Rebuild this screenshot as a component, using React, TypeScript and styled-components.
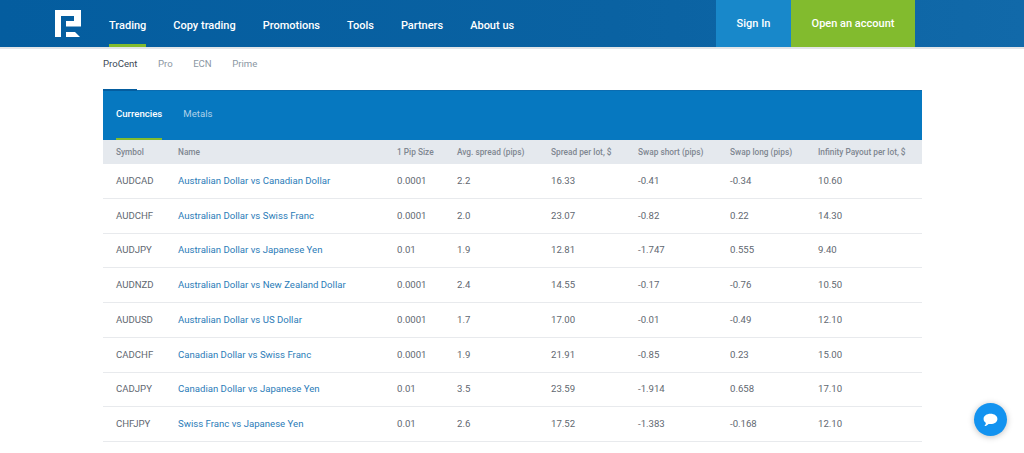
import React from 'react';
import styled, { createGlobalStyle } from 'styled-components';

const GlobalStyle = createGlobalStyle`
  html, body {
    margin: 0;
    padding: 0;
    background: #fff;
    font-family: Roboto, "Liberation Sans", sans-serif;
    overflow: hidden;
  }
`;

const Page = styled.div`
  position: relative;
  width: 1024px;
  height: 453px;
  overflow: hidden;
  background: #fff;
`;

const Header = styled.header`
  display: flex;
  height: 47px;
  padding-left: 55px;
  background: linear-gradient(90deg, #045d9f 0%, #0a62a2 60%, #1169a9 100%);
  border-bottom: 2px solid #e2e5e8;
`;

const Logo = styled.svg`
  width: 26px;
  height: 27px;
  margin-top: 10px;
  margin-right: 28px;
  flex-shrink: 0;
`;

const Nav = styled.nav`
  display: flex;
  gap: 27px;
  flex: 1;
`;

const NavItem = styled.a<{ $active?: boolean }>`
  display: flex;
  align-items: center;
  height: 47px;
  box-sizing: border-box;
  padding-top: 6px;
  font-size: 11px;
  font-weight: 500;
  color: #fff;
  border-bottom: 3px solid ${(props) => (props.$active ? '#82bb2e' : 'transparent')};
`;

const SignIn = styled.a`
  display: flex;
  align-items: center;
  justify-content: center;
  width: 75px;
  height: 47px;
  font-size: 11px;
  font-weight: 500;
  color: #fff;
  background: #1888ca;
`;

const OpenAccount = styled(SignIn)`
  width: 124px;
  margin-right: 109px;
  background: #82bb2e;
`;

const Main = styled.main`
  margin: 0 102px 0 103px;
`;

const AccountTabs = styled.div`
  display: flex;
  gap: 20.5px;
  height: 41px;
`;

const AccountTab = styled.a<{ $active?: boolean }>`
  padding-top: 8px;
  font-size: 9.6px;
  line-height: 14px;
  white-space: nowrap;
  color: ${(props) => (props.$active ? '#3d4a57' : '#8b97a3')};
`;

const Panel = styled.section`
  position: relative;
  border-top: 1px solid #0a6cb0;
`;

const ActiveMark = styled.span`
  position: absolute;
  left: 0;
  top: -2px;
  width: 34px;
  height: 2px;
  background: #045d9f;
`;

const InstrumentTabs = styled.div`
  display: flex;
  gap: 21px;
  height: 49px;
  padding-left: 13px;
  background: #0678c0;
`;

const InstrumentTab = styled.a<{ $active?: boolean }>`
  height: 49px;
  box-sizing: border-box;
  padding-top: 16px;
  font-size: 9.6px;
  line-height: 14px;
  font-weight: ${(props) => (props.$active ? 500 : 400)};
  color: ${(props) => (props.$active ? '#fff' : '#b0d2e9')};
  border-bottom: 2px solid ${(props) => (props.$active ? '#82bb2e' : 'transparent')};
`;

const Row = styled.div`
  display: grid;
  grid-template-columns: 62px 219px 60px 94px 87px 92px 88px 1fr;
  padding-left: 13px;
  align-items: center;
`;

const HeadRow = styled(Row)`
  height: 24px;
  background: #e5e9ee;
  font-size: 8.3px;
  font-weight: 500;
  color: #7f8791;
  white-space: nowrap;
`;

const BodyRow = styled(Row)`
  height: 34.75px;
  box-sizing: border-box;
  padding-bottom: 1px;
  border-bottom: 1px solid #e8eaed;
  font-size: 9.6px;
  color: #5f6871;
`;

const PairLink = styled.a`
  color: #2b7cb8;
  white-space: nowrap;
`;

const ChatButton = styled.button`
  position: absolute;
  left: 974px;
  top: 403px;
  display: flex;
  align-items: center;
  justify-content: center;
  width: 33px;
  height: 33px;
  padding: 0;
  border: 0;
  border-radius: 50%;
  background: #1393f0;
  box-shadow: 0 1px 6px rgba(0, 0, 0, 0.25);
`;

const navItems = ['Trading', 'Copy trading', 'Promotions', 'Tools', 'Partners', 'About us'];
const accountTypes = ['ProCent', 'Pro', 'ECN', 'Prime'];
const columns = ['Symbol', 'Name', '1 Pip Size', 'Avg. spread (pips)', 'Spread per lot, $', 'Swap short (pips)', 'Swap long (pips)', 'Infinity Payout per lot, $'];

const rows = [
  ['AUDCAD', 'Australian Dollar vs Canadian Dollar', '0.0001', '2.2', '16.33', '-0.41', '-0.34', '10.60'],
  ['AUDCHF', 'Australian Dollar vs Swiss Franc', '0.0001', '2.0', '23.07', '-0.82', '0.22', '14.30'],
  ['AUDJPY', 'Australian Dollar vs Japanese Yen', '0.01', '1.9', '12.81', '-1.747', '0.555', '9.40'],
  ['AUDNZD', 'Australian Dollar vs New Zealand Dollar', '0.0001', '2.4', '14.55', '-0.17', '-0.76', '10.50'],
  ['AUDUSD', 'Australian Dollar vs US Dollar', '0.0001', '1.7', '17.00', '-0.01', '-0.49', '12.10'],
  ['CADCHF', 'Canadian Dollar vs Swiss Franc', '0.0001', '1.9', '21.91', '-0.85', '0.23', '15.00'],
  ['CADJPY', 'Canadian Dollar vs Japanese Yen', '0.01', '3.5', '23.59', '-1.914', '0.658', '17.10'],
  ['CHFJPY', 'Swiss Franc vs Japanese Yen', '0.01', '2.6', '17.52', '-1.383', '-0.168', '12.10'],
];

const App = () => (
  <Page>
    <GlobalStyle />
    <Header>
      <Logo viewBox="0 0 26 27">
        <path fill="#fff" d="M0 0H26V16.5H11V11H19V6H6V27H0V0Z" />
        <path fill="#fff" d="M11 22H20L25 27H11V22Z" />
      </Logo>
      <Nav>
        {navItems.map((item) => (
          <NavItem key={item} $active={item === 'Trading'}>{item}</NavItem>
        ))}
      </Nav>
      <SignIn>Sign In</SignIn>
      <OpenAccount>Open an account</OpenAccount>
    </Header>
    <Main>
      <AccountTabs>
        {accountTypes.map((type) => (
          <AccountTab key={type} $active={type === 'ProCent'}>{type}</AccountTab>
        ))}
      </AccountTabs>
      <Panel>
        <ActiveMark />
        <InstrumentTabs>
          <InstrumentTab $active>Currencies</InstrumentTab>
          <InstrumentTab>Metals</InstrumentTab>
        </InstrumentTabs>
        <HeadRow>
          {columns.map((col) => <span key={col}>{col}</span>)}
        </HeadRow>
        {rows.map((row) => (
          <BodyRow key={row[0]}>
            {row.map((cell, i) => (i === 1 ? <PairLink key={i}>{cell}</PairLink> : <span key={i}>{cell}</span>))}
          </BodyRow>
        ))}
      </Panel>
    </Main>
    <ChatButton aria-label="Chat">
      <svg width="15" height="14" viewBox="0 0 15 14">
        <path fill="#fff" d="M7.5 0.8C11.4 0.8 14.4 3 14.4 6C14.4 9 11.4 11.1 7.5 11.1C6.8 11.1 6.2 11 5.6 10.9C4.5 12 3.1 12.9 1.4 13.1C2.2 12.2 2.7 11.2 2.9 9.9C1.4 8.9 0.6 7.6 0.6 6C0.6 3 3.6 0.8 7.5 0.8Z" />
      </svg>
    </ChatButton>
  </Page>
);

export default App;
